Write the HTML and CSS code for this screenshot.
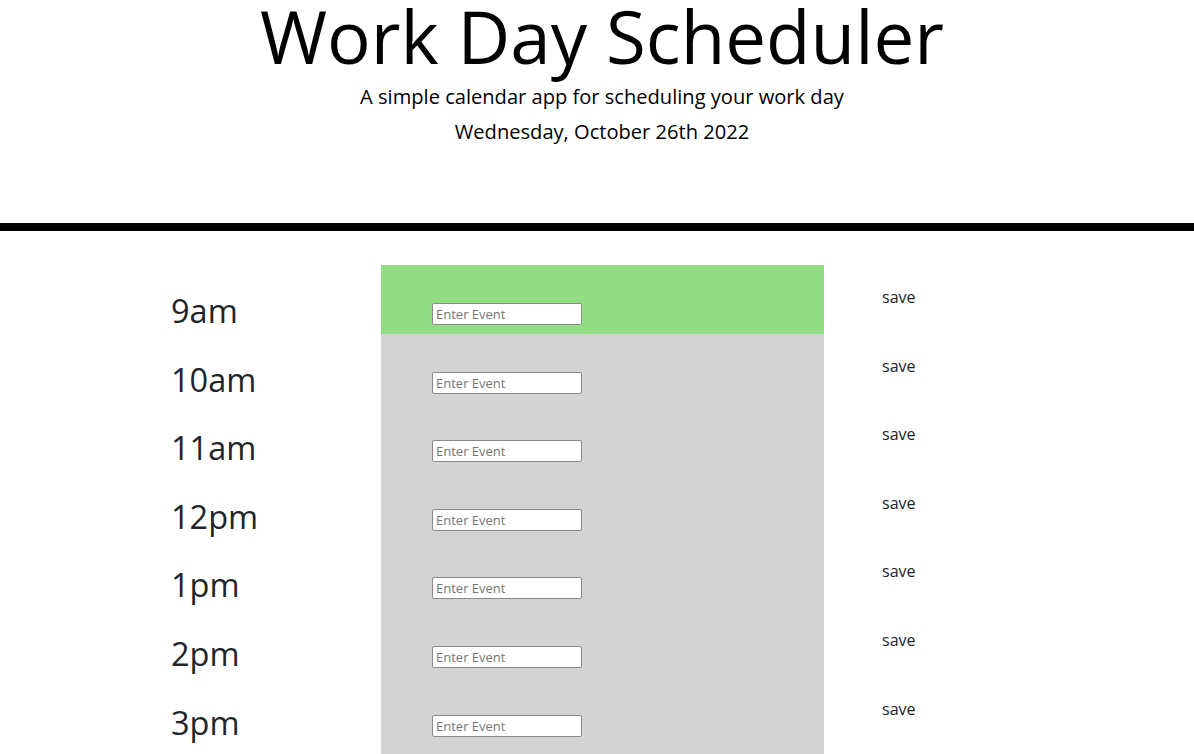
FILE: index.html
```html
<!DOCTYPE html>
<html>
<head>
<meta charset="utf-8">
<link rel="stylesheet" href="styles.css">
</head>
<body>
<header class="header">
  <h1 class="title">Work Day Scheduler</h1>
  <p class="lead">A simple calendar app for scheduling your work day</p>
  <p class="date">Wednesday, October 26th 2022</p>
</header>
<main class="schedule">
  <div class="row"><div class="hour">9am</div><div class="slot present"><input class="event" placeholder="Enter Event"></div><div class="save">save</div></div>
  <div class="row"><div class="hour">10am</div><div class="slot"><input class="event" placeholder="Enter Event"></div><div class="save">save</div></div>
  <div class="row"><div class="hour">11am</div><div class="slot"><input class="event" placeholder="Enter Event"></div><div class="save">save</div></div>
  <div class="row"><div class="hour">12pm</div><div class="slot"><input class="event" placeholder="Enter Event"></div><div class="save">save</div></div>
  <div class="row"><div class="hour">1pm</div><div class="slot"><input class="event" placeholder="Enter Event"></div><div class="save">save</div></div>
  <div class="row"><div class="hour">2pm</div><div class="slot"><input class="event" placeholder="Enter Event"></div><div class="save">save</div></div>
  <div class="row"><div class="hour">3pm</div><div class="slot"><input class="event" placeholder="Enter Event"></div><div class="save">save</div></div>
  <div class="row"><div class="hour">4pm</div><div class="slot"><input class="event" placeholder="Enter Event"></div><div class="save">save</div></div>
  <div class="row"><div class="hour">5pm</div><div class="slot"><input class="event" placeholder="Enter Event"></div><div class="save">save</div></div>
</main>
</body>
</html>
```

FILE: styles.css
```css
html, body {
  margin: 0;
  padding: 0;
  background: #fff;
  font-family: "Open Sans", "Liberation Sans", sans-serif;
  color: #000;
}
.header {
  text-align: center;
  border-bottom: 8px solid #000;
  padding: 0 0 78px 10px;
}
.title {
  margin: 0;
  font-size: 72.7px;
  font-weight: 400;
  line-height: 72px;
}
.lead {
  margin: 0;
  font-size: 20.1px;
  line-height: 26px;
  padding-top: 12px;
}
.date {
  margin: 0;
  font-size: 20.1px;
  line-height: 26px;
  padding-top: 9px;
}
.schedule {
  padding-top: 34px;
}
.row {
  display: grid;
  grid-template-columns: 381px 443px 1fr;
  height: 68.6px;
}
.hour {
  padding-left: 171px;
  font-size: 32.5px;
  color: #212529;
  padding-top: 24px;
  line-height: 44px;
}
.slot {
  background: #d3d3d3;
  padding-left: 51px;
  padding-top: 38px;
  box-sizing: border-box;
}
.slot.present {
  background: #92dc83;
}
.event {
  display: block;
  width: 150px;
  height: 22px;
  box-sizing: border-box;
  border: 1px solid #8a8a8a;
  border-radius: 2px;
  padding: 0 3px;
  font-family: "Open Sans", "Liberation Sans", sans-serif;
  font-size: 13px;
  background: #fff;
  margin: 0;
}
.event::placeholder {
  color: #757575;
}
.save {
  padding-left: 58px;
  padding-top: 21px;
  font-size: 16px;
  line-height: 22px;
  color: #212529;
}
```
